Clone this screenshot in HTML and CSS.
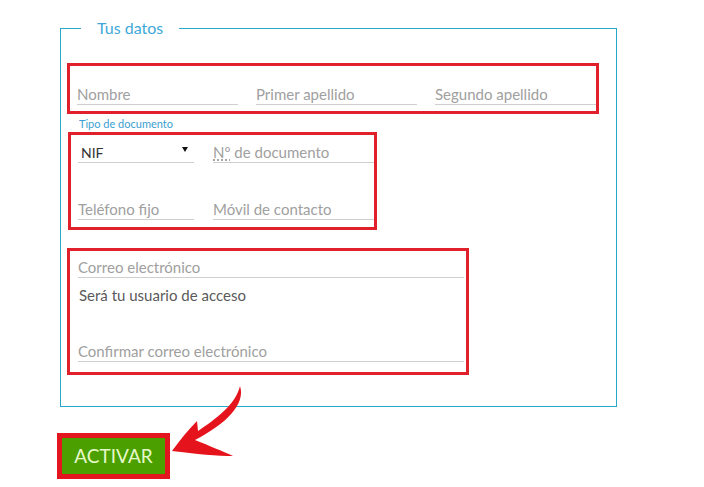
FILE: index.html
```html
<!DOCTYPE html>
<html lang="es">
<head>
<meta charset="utf-8">
<title>Tus datos</title>
<link rel="stylesheet" href="styles.css">
</head>
<body>
<div class="page">
  <fieldset class="datos">
    <legend class="datos-legend">Tus datos</legend>

    <div class="hl hl-names">
      <div class="field"><span class="ph">Nombre</span></div>
      <div class="field"><span class="ph">Primer apellido</span></div>
      <div class="field"><span class="ph">Segundo apellido</span></div>
    </div>

    <div class="tipo-label">Tipo de documento</div>

    <div class="hl hl-doc">
      <div class="field select"><span class="val">NIF</span><span class="caret"></span></div>
      <div class="field"><span class="ph"><abbr class="num" title="Número">Nº</abbr> de documento</span></div>
      <div class="field"><span class="ph">Teléfono fijo</span></div>
      <div class="field"><span class="ph">Móvil de contacto</span></div>
    </div>

    <div class="hl hl-mail">
      <div class="field"><span class="ph">Correo electrónico</span></div>
      <p class="hint">Será tu usuario de acceso</p>
      <div class="field confirm"><span class="ph">Confirmar correo electrónico</span></div>
    </div>
  </fieldset>

  <div class="btn-frame"><button class="btn-activar" type="button">ACTIVAR</button></div>

  <svg class="arrow" width="704" height="487" viewBox="0 0 704 487" aria-hidden="true">
    <path d="M240,386 C246,404 226,424 195,440 C210,446 222,451 233,456 C218,456 196,454 172,451 C180,440 188,430 197,421 L198,431 C216,419 236,404 240,386 Z" fill="#e5141c"/>
  </svg>
</div>
</body>
</html>
```

FILE: styles.css
```css
* { box-sizing: border-box; }

html, body {
  margin: 0;
  padding: 0;
  background: #ffffff;
}

body {
  font-family: Lato, "Open Sans", "Liberation Sans", sans-serif;
  color: #333333;
}

.page {
  position: relative;
  width: 704px;
  height: 487px;
  padding: 18px 0 0 57px;
}

.datos {
  margin: 0 0 0 3px;
  width: 557px;
  border: 1px solid #27a6c8;
  padding: 25px 0 31px 6px;
  min-width: 0;
}

.datos-legend {
  margin-left: 14px;
  padding: 0 16px;
  font-size: 16px;
  line-height: 20px;
  color: #3fa8d8;
}

.hl {
  border: 3px solid #e0202a;
}

.hl-names {
  width: 532px;
  padding: 15px 0 6px 7px;
  display: grid;
  grid-template-columns: repeat(3, 1fr);
  column-gap: 18px;
}

.field {
  height: 24px;
  border-bottom: 1px solid #cfcfcf;
  display: flex;
  align-items: flex-end;
  font-size: 15px;
  line-height: 19px;
}

.ph {
  color: #a0a0a0;
  white-space: nowrap;
}

.num {
  text-decoration: underline dotted #888;
  text-underline-offset: 2px;
}

.tipo-label {
  margin: 3px 0 1px 12px;
  font-size: 11px;
  line-height: 14px;
  color: #3a9fd2;
}

.hl-doc {
  width: 309px;
  margin-left: 1px;
  padding: 4px 0 7px 7px;
  display: grid;
  grid-template-columns: 116px 1fr;
  column-gap: 19px;
  row-gap: 33px;
}

.select {
  justify-content: space-between;
  padding: 0 6px 0 3px;
}

.val {
  font-size: 14px;
  color: #333333;
  line-height: 19px;
}

.caret {
  align-self: flex-start;
  margin-top: 8px;
  width: 0;
  height: 0;
  border-left: 3px solid transparent;
  border-right: 3px solid transparent;
  border-top: 5px solid #111111;
}

.hl-mail {
  width: 402px;
  margin-top: 18px;
  padding: 3px 2px 10px 8px;
}

.hint {
  margin: 7px 0 0 1px;
  font-size: 15px;
  line-height: 20px;
  color: #5a5a5a;
}

.confirm {
  margin-top: 33px;
}

.btn-frame {
  margin-top: 26px;
  width: 113px;
  height: 46px;
  border: 5px solid #e3161f;
}

.btn-activar {
  display: block;
  width: 100%;
  height: 100%;
  margin: 0;
  padding: 0;
  border: 0;
  background: #4ba000;
  color: #e6f8c8;
  font-family: Lato, "Open Sans", "Liberation Sans", sans-serif;
  font-size: 19px;
  line-height: 36px;
  text-align: center;
}

.arrow {
  position: absolute;
  left: 0;
  top: 0;
  pointer-events: none;
}
```
